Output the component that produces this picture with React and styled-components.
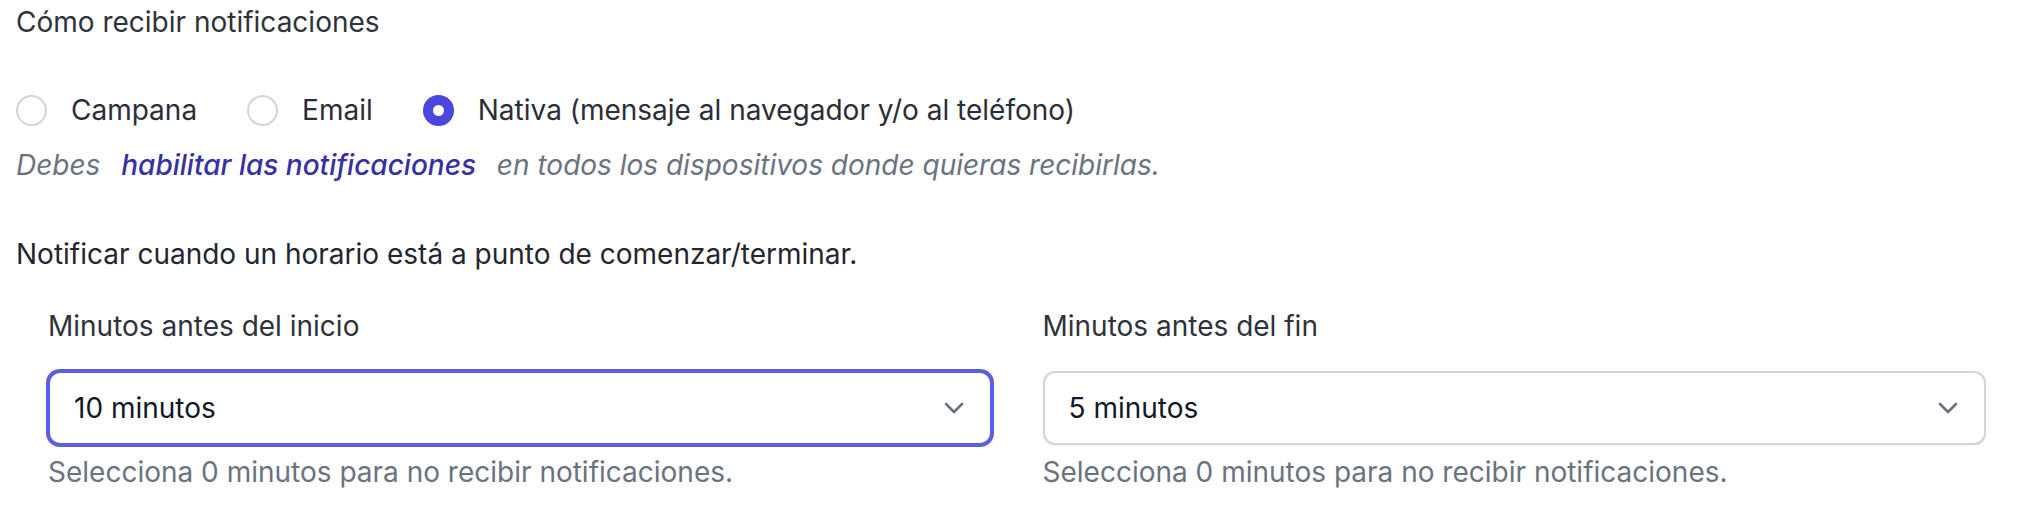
import React, { useState } from 'react';
import styled, { createGlobalStyle } from 'styled-components';

const GlobalStyle = createGlobalStyle`
  html, body {
    margin: 0;
    padding: 0;
    background: #ffffff;
  }
  body {
    font-family: Inter, "Noto Sans", "Liberation Sans", sans-serif;
    -webkit-font-smoothing: antialiased;
  }
`;

const Page = styled.div`
  padding: 3px 16px 0 16px;
  display: flex;
  flex-direction: column;
  font-size: 28px;
  line-height: 38px;
  color: #2b2e37;
`;

const Title = styled.div`
  color: #2f323b;
`;

const RadioRow = styled.div`
  display: flex;
  align-items: center;
  gap: 50px;
  margin-top: 50px;
  height: 38px;
`;

const RadioOption = styled.label`
  display: flex;
  align-items: center;
  gap: 24px;
  color: #2b2e37;
  cursor: pointer;
`;

const RadioDot = styled.span`
  width: 31px;
  height: 31px;
  box-sizing: border-box;
  border-radius: 50%;
  border: ${p => (p.$checked ? 'none' : '2px solid #d1d5db')};
  background: ${p => (p.$checked ? '#4b46dc' : '#ffffff')};
  display: flex;
  align-items: center;
  justify-content: center;
  &::after {
    content: '';
    display: ${p => (p.$checked ? 'block' : 'none')};
    width: 11px;
    height: 11px;
    border-radius: 50%;
    background: #ffffff;
  }
`;

const Hint = styled.p`
  margin: 17px 0 0 0;
  font-style: italic;
  color: #6b7280;
`;

const HintLink = styled.a`
  color: #3730a3;
  font-weight: 500;
  text-decoration: none;
  margin: 0 13px;
`;

const Question = styled.div`
  margin-top: 51px;
  color: #23262e;
`;

const Fields = styled.div`
  display: grid;
  grid-template-columns: 1fr 1fr;
  column-gap: 51px;
  padding: 0 32px;
  margin-top: 34px;
`;

const Field = styled.div`
  display: flex;
  flex-direction: column;
`;

const FieldLabel = styled.div`
  color: #2f323b;
`;

const SelectBox = styled.div`
  margin-top: 26px;
  height: 74px;
  box-sizing: border-box;
  border-radius: 12px;
  border: 2px solid ${p => (p.$focused ? '#5e5fe0' : '#d1d5db')};
  box-shadow: ${p =>
    p.$focused
      ? '0 0 0 2px #5e5fe0'
      : '0 1px 2px rgba(0, 0, 0, 0.05)'};
  display: flex;
  align-items: center;
  justify-content: space-between;
  padding: 0 26px 0 24px;
  color: #111827;
  background: #ffffff;
  cursor: pointer;
`;

const Chevron = () => (
  <svg width="20" height="12" viewBox="0 0 20 12" fill="none">
    <path
      d="M2 2l8 8 8-8"
      stroke="#6b7280"
      strokeWidth="2.6"
      strokeLinecap="round"
      strokeLinejoin="round"
    />
  </svg>
);

const Help = styled.div`
  margin-top: 8px;
  color: #6b7280;
`;

const options = [
  { id: 'bell', label: 'Campana' },
  { id: 'email', label: 'Email' },
  { id: 'native', label: 'Nativa (mensaje al navegador y/o al teléfono)' },
];

export default function App() {
  const [channel, setChannel] = useState('native');

  return (
    <>
      <GlobalStyle />
      <Page>
        <Title>Cómo recibir notificaciones</Title>
        <RadioRow>
          {options.map(o => (
            <RadioOption key={o.id} onClick={() => setChannel(o.id)}>
              <RadioDot $checked={channel === o.id} />
              {o.label}
            </RadioOption>
          ))}
        </RadioRow>
        <Hint>
          Debes <HintLink href="#">habilitar las notificaciones</HintLink> en
          todos los dispositivos donde quieras recibirlas.
        </Hint>
        <Question>Notificar cuando un horario está a punto de comenzar/terminar.</Question>
        <Fields>
          <Field>
            <FieldLabel>Minutos antes del inicio</FieldLabel>
            <SelectBox $focused>
              10 minutos
              <Chevron />
            </SelectBox>
            <Help>Selecciona 0 minutos para no recibir notificaciones.</Help>
          </Field>
          <Field>
            <FieldLabel>Minutos antes del fin</FieldLabel>
            <SelectBox>
              5 minutos
              <Chevron />
            </SelectBox>
            <Help>Selecciona 0 minutos para no recibir notificaciones.</Help>
          </Field>
        </Fields>
      </Page>
    </>
  );
}
